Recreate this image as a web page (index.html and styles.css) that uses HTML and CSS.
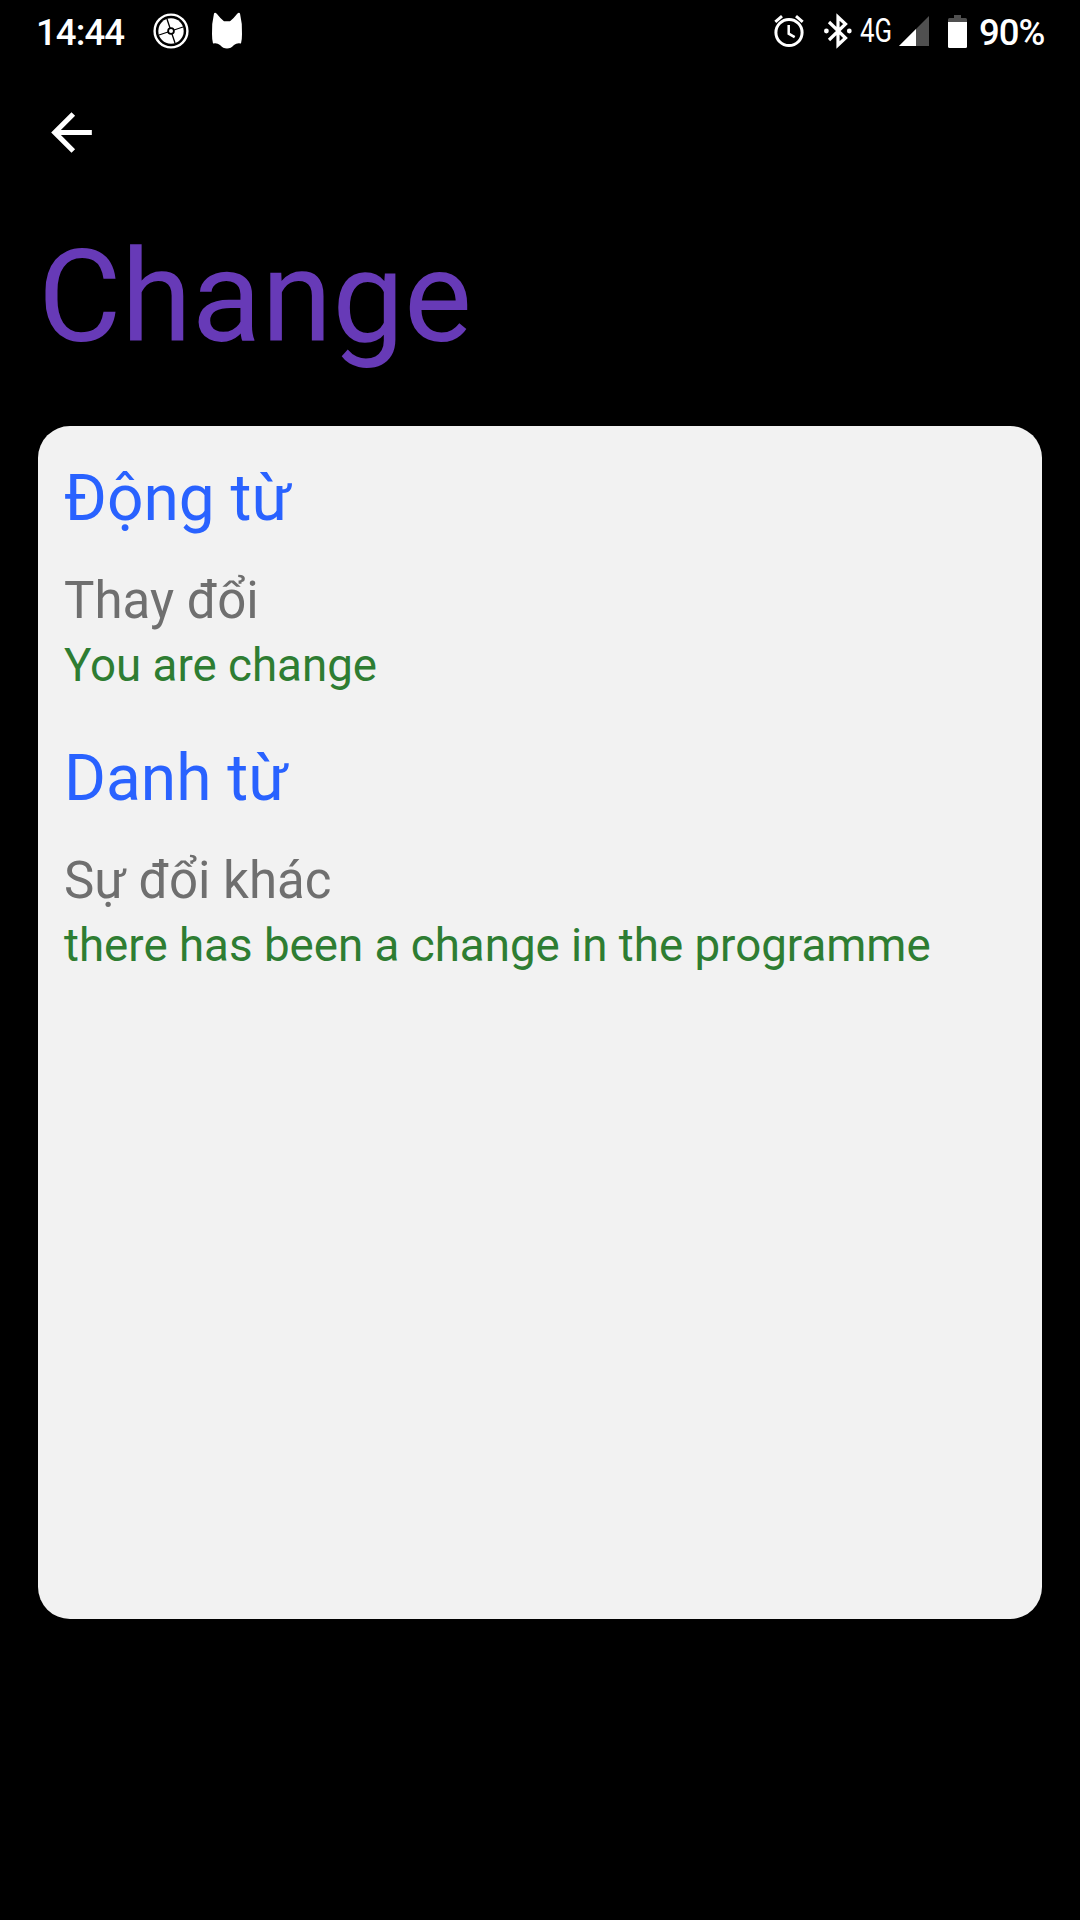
FILE: index.html
```html
<!DOCTYPE html>
<html lang="vi">
<head>
<meta charset="utf-8">
<title>Change</title>
<link rel="stylesheet" href="styles.css">
</head>
<body>
<header class="status">
  <div class="status-left">
    <span class="clock">14:44</span>
    <svg viewBox="0 0 36 36" width="36" height="36"><circle cx="18" cy="18" r="16.400" fill="none" stroke="#fff" stroke-width="2.400"/><circle cx="18" cy="18" r="12.700" fill="#fff"/><path d="M18 18 14 6M18 18l12-4M18 18l4 12M18 18 6 22" stroke="#000" stroke-width="1.300"/><circle cx="18" cy="18" r="3.800" fill="#000"/><circle cx="18" cy="18" r="2" fill="#fff"/></svg>
    <svg viewBox="0 0 32 38" width="32" height="38"><path fill="#fff" d="M3 1.500Q4 0 6 2Q9 6 13 9.200H19Q23 6 26 2Q28 0 29 1.500Q31.500 12 31 22Q31 28 30 31.500Q26 30.500 23 33Q20 36.500 16 36.500Q12 36.500 9 33Q6 30.500 2 31.500Q1 28 1 22Q.5 12 3 1.500Z"/></svg>
  </div>
  <div class="status-right">
    <svg class="alarm" viewBox="0 0 32 34" width="32" height="34" fill="none" stroke="#fff"><circle cx="16" cy="18.500" r="13.100" stroke-width="3"/><path d="M2.300 7.800 9 2.200M23 2.200l6.700 5.600" stroke-width="3"/><path d="M15.700 11v8.700l6 3.500" stroke-width="2.500"/></svg>
    <svg class="bluetooth" viewBox="0 0 28 34" width="28" height="34"><path d="M5 8 21.500 24 14 31V3l7.500 7L5 26" fill="none" stroke="#fff" stroke-width="3.200"/><circle cx="2.400" cy="17" r="2.400" fill="#fff"/><circle cx="25.300" cy="17" r="2.400" fill="#fff"/></svg>
    <svg class="network" width="36" height="46"><text x="1" y="33.500" textLength="32" lengthAdjust="spacingAndGlyphs">4G</text></svg>
    <svg class="signal" viewBox="0 0 30 30" width="30" height="30"><path fill="#505050" d="M30 0V30H0Z"/><path fill="#fff" d="M17 13V30H0Z"/></svg>
    <svg class="battery" viewBox="0 0 19 33" width="19" height="33"><path fill="#505050" d="M6 0H13V3H17.500Q19 3 19 4.500V8H0V4.500Q0 3 1.500 3H6Z"/><path fill="#fff" d="M0 7H19V31.500Q19 33 17.500 33H1.500Q0 33 0 31.500Z"/></svg>
    <span class="percent">90%</span>
  </div>
</header>
<nav class="toolbar"><svg viewBox="0 0 24 24" width="61" height="61"><path fill="#fff" d="M20 11H7.830l5.590-5.590L12 4l-8 8 8 8 1.410-1.410L7.830 13H20z"/></svg></nav>
<h1 class="word">Change</h1>
<main class="card">
  <section class="entry"><h2>Động từ</h2><p class="meaning">Thay đổi</p><p class="example">You are change</p></section>
  <section class="entry"><h2>Danh từ</h2><p class="meaning">Sự đổi khác</p><p class="example">there has been a change in the programme</p></section>
</main>
</body>
</html>
```
FILE: styles.css
```css
* { box-sizing: border-box; margin: 0; padding: 0; }
body { width: 1080px; height: 1920px; overflow: hidden; background: #000; font-family: Roboto, sans-serif; }
svg { display: block; flex: none; overflow: visible; }
.status { height: 63px; padding: 0 35px 1px 36px; display: flex; align-items: center; justify-content: space-between; color: #fff; font-size: 36.500px; font-weight: 500; line-height: 64px; }
.status-left, .status-right { display: flex; align-items: center; }
.status-left { gap: 22px; }
.clock { width: 95px; padding-top: 3px; letter-spacing: -.9px; }
.alarm { margin-right: 19px; }
.bluetooth { margin-right: 7px; }
.network { margin-right: 4px; fill: #fff; font-size: 33px; font-weight: 400; line-height: 40px; }
.signal { margin-right: 19px; }
.battery { margin-right: 12px; }
.percent { width: 66px; padding-top: 3px; letter-spacing: -1px; }
.toolbar { height: 138px; padding: 39px 41px; }
.word { height: 225px; padding: 8px 38px; color: #673ab7; font-size: 128px; line-height: 176px; font-weight: 400; }
.card { width: 1004px; height: 1193px; margin-left: 38px; padding: 31px 26px; background: #f2f2f2; border-radius: 32px; }
.entry { height: 280px; }
h2 { color: #2962ff; font-size: 64px; line-height: 84px; font-weight: 400; }
.meaning { margin-top: 26px; color: #6f6f6f; font-size: 51px; line-height: 67px; }
.example { padding-top: 1px; color: #2e7d32; font-size: 45.700px; line-height: 62px; }
```
